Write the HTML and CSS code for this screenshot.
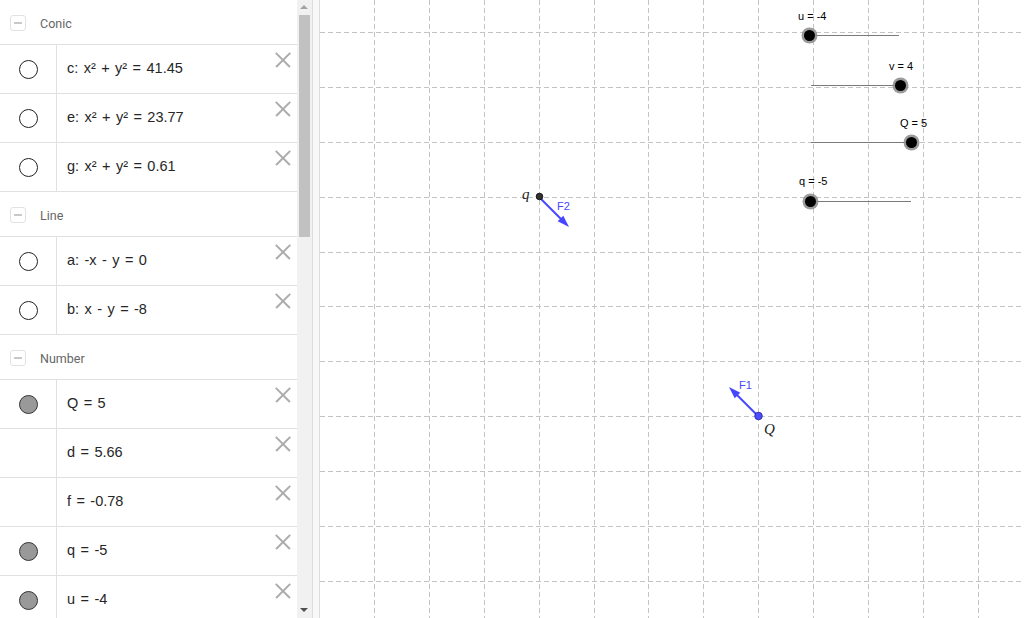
FILE: index.html
```html
<!DOCTYPE html>
<html>
<head>
<meta charset="utf-8">
<link rel="stylesheet" href="styles.css">
</head>
<body>
<div class="app">
  <div class="algebra">
    <div class="list">
      <div class="group-head"><span class="collapse"></span><span class="gname">Conic</span></div>
      <div class="row"><div class="marker"><span class="dot"></span></div><div class="expr">c: x² + y² = 41.45</div><span class="del"></span></div>
      <div class="row"><div class="marker"><span class="dot"></span></div><div class="expr">e: x² + y² = 23.77</div><span class="del"></span></div>
      <div class="row"><div class="marker"><span class="dot"></span></div><div class="expr">g: x² + y² = 0.61</div><span class="del"></span></div>
      <div class="group-head"><span class="collapse"></span><span class="gname">Line</span></div>
      <div class="row"><div class="marker"><span class="dot"></span></div><div class="expr">a: -x - y = 0</div><span class="del"></span></div>
      <div class="row"><div class="marker"><span class="dot"></span></div><div class="expr">b: x - y = -8</div><span class="del"></span></div>
      <div class="group-head"><span class="collapse"></span><span class="gname">Number</span></div>
      <div class="row"><div class="marker"><span class="dot filled"></span></div><div class="expr">Q = 5</div><span class="del"></span></div>
      <div class="row"><div class="marker"></div><div class="expr">d = 5.66</div><span class="del"></span></div>
      <div class="row"><div class="marker"></div><div class="expr">f = -0.78</div><span class="del"></span></div>
      <div class="row"><div class="marker"><span class="dot filled"></span></div><div class="expr">q = -5</div><span class="del"></span></div>
      <div class="row"><div class="marker"><span class="dot filled"></span></div><div class="expr">u = -4</div><span class="del"></span></div>
    </div>
    <div class="scrollbar">
      <div class="arrow up"></div>
      <div class="thumb"></div>
      <div class="track-fill"></div>
      <div class="arrow down"></div>
    </div>
  </div>
  <div class="splitter"></div>
  <div class="graphics">
    <svg class="canvas" width="704" height="618" viewBox="320 0 704 618">
      <g class="grid">
        <line x1="374.5" y1="0" x2="374.5" y2="618"/>
        <line x1="429.5" y1="0" x2="429.5" y2="618"/>
        <line x1="484.5" y1="0" x2="484.5" y2="618"/>
        <line x1="539.5" y1="0" x2="539.5" y2="618"/>
        <line x1="594.5" y1="0" x2="594.5" y2="618"/>
        <line x1="648.5" y1="0" x2="648.5" y2="618"/>
        <line x1="703.5" y1="0" x2="703.5" y2="618"/>
        <line x1="758.5" y1="0" x2="758.5" y2="618"/>
        <line x1="813.5" y1="0" x2="813.5" y2="618"/>
        <line x1="868.5" y1="0" x2="868.5" y2="618"/>
        <line x1="923.5" y1="0" x2="923.5" y2="618"/>
        <line x1="978.5" y1="0" x2="978.5" y2="618"/>
        <line x1="320" y1="32.5" x2="1024" y2="32.5"/>
        <line x1="320" y1="87.5" x2="1024" y2="87.5"/>
        <line x1="320" y1="142.5" x2="1024" y2="142.5"/>
        <line x1="320" y1="197.5" x2="1024" y2="197.5"/>
        <line x1="320" y1="252.5" x2="1024" y2="252.5"/>
        <line x1="320" y1="306.5" x2="1024" y2="306.5"/>
        <line x1="320" y1="361.5" x2="1024" y2="361.5"/>
        <line x1="320" y1="416.5" x2="1024" y2="416.5"/>
        <line x1="320" y1="471.5" x2="1024" y2="471.5"/>
        <line x1="320" y1="526.5" x2="1024" y2="526.5"/>
        <line x1="320" y1="581.5" x2="1024" y2="581.5"/>
      </g>
      <g class="sliders">
        <line x1="809" y1="35.5" x2="899" y2="35.5"/>
        <line x1="811" y1="85.5" x2="900" y2="85.5"/>
        <line x1="811" y1="142.5" x2="911" y2="142.5"/>
        <line x1="811" y1="201.5" x2="911" y2="201.5"/>
      </g>
      <g class="knobs">
        <circle class="halo" cx="809.5" cy="35.5" r="8"/><circle class="core" cx="809.5" cy="35.5" r="5.5"/>
        <circle class="halo" cx="900.5" cy="85.5" r="8"/><circle class="core" cx="900.5" cy="85.5" r="5.5"/>
        <circle class="halo" cx="911.5" cy="142.5" r="8"/><circle class="core" cx="911.5" cy="142.5" r="5.5"/>
        <circle class="halo" cx="810.5" cy="201.5" r="8"/><circle class="core" cx="810.5" cy="201.5" r="5.5"/>
      </g>
      <g class="slabels">
        <text x="798" y="20">u = -4</text>
        <text x="889" y="70">v = 4</text>
        <text x="900" y="127">Q = 5</text>
        <text x="799" y="185">q = -5</text>
      </g>
      <g class="vec">
        <line x1="539" y1="197" x2="561" y2="219"/>
        <polygon points="569,227 557.7,221.3 563.3,215.7"/>
        <line x1="758" y1="416" x2="737" y2="395"/>
        <polygon points="729,387 740.3,392.7 734.7,398.3"/>
      </g>
      <text class="vlabel" x="557" y="210">F2</text>
      <text class="vlabel" x="739" y="389">F1</text>
      <circle class="pt-black" cx="539.5" cy="196.5" r="3.3"/>
      <circle class="pt-blue" cx="758.5" cy="416" r="3.8"/>
      <text class="plabel" x="522" y="199">q</text>
      <text class="plabel" x="764" y="434">Q</text>
    </svg>
  </div>
</div>
</body>
</html>
```

FILE: styles.css
```css
html, body {
  margin: 0;
  padding: 0;
  background: #fff;
}
body {
  font-family: "Liberation Sans", Arial, sans-serif;
}
.app {
  display: flex;
  width: 1024px;
  height: 618px;
  overflow: hidden;
  background: #fff;
}
.algebra {
  display: flex;
  width: 312px;
  height: 618px;
  flex-shrink: 0;
}
.list {
  width: 297px;
  height: 618px;
  overflow: hidden;
  flex-shrink: 0;
  background: #fff;
}
.group-head {
  height: 44px;
  border-bottom: 1px solid #e0e0e0;
  display: flex;
  align-items: center;
  padding-left: 10px;
}
.collapse {
  width: 14px;
  height: 14px;
  border: 1px solid #e2e2e2;
  border-radius: 3px;
  position: relative;
  box-sizing: content-box;
  margin-top: 2px;
}
.collapse::after {
  content: "";
  position: absolute;
  left: 3px;
  top: 6px;
  width: 8px;
  height: 2px;
  background: #c8c8c8;
}
.gname {
  margin-left: 14px;
  font-family: Roboto, "Open Sans", sans-serif;
  font-size: 12.5px;
  color: #666;
  padding-top: 2px;
}
.row {
  height: 48px;
  border-bottom: 1px solid #e0e0e0;
  display: flex;
  align-items: center;
}
.marker {
  width: 56px;
  height: 48px;
  border-right: 1px solid #e0e0e0;
  display: flex;
  align-items: center;
  justify-content: center;
  flex-shrink: 0;
}
.dot {
  width: 17px;
  height: 17px;
  border: 1.3px solid #222;
  border-radius: 50%;
  background: #fff;
  margin-left: 1px;
}
.dot.filled {
  background: #999;
  border-color: #333;
}
.expr {
  padding-left: 10px;
  padding-bottom: 3px;
  font-size: 14.5px;
  color: #262626;
  flex: 1;
  white-space: pre;
  word-spacing: 1.4px;
}
.del {
  width: 16px;
  height: 16px;
  margin-right: 6px;
  align-self: flex-start;
  margin-top: 7px;
  position: relative;
}
.del::before, .del::after {
  content: "";
  position: absolute;
  left: -2px;
  top: 7px;
  width: 20px;
  height: 1.5px;
  background: #acacac;
  transform: rotate(45deg);
}
.del::after {
  transform: rotate(-45deg);
}
.scrollbar {
  width: 15px;
  height: 618px;
  background: #f1f1f1;
  display: flex;
  flex-direction: column;
  align-items: center;
  flex-shrink: 0;
}
.arrow {
  width: 15px;
  height: 15px;
  position: relative;
  flex-shrink: 0;
}
.arrow.up::after {
  content: "";
  position: absolute;
  left: 3px;
  top: 5px;
  border-left: 4px solid transparent;
  border-right: 4px solid transparent;
  border-bottom: 4px solid #a3a3a3;
}
.arrow.down::after {
  content: "";
  position: absolute;
  left: 3px;
  top: 5px;
  border-left: 4px solid transparent;
  border-right: 4px solid transparent;
  border-top: 4px solid #505050;
}
.thumb {
  width: 11px;
  height: 222px;
  background: #c1c1c1;
  flex-shrink: 0;
}
.track-fill {
  flex: 1;
}
.splitter {
  width: 6px;
  height: 618px;
  background: #f8f8f8;
  border-left: 1px solid #dcdcdc;
  border-right: 1px solid #dcdcdc;
  flex-shrink: 0;
}
.graphics {
  width: 704px;
  height: 618px;
  flex-shrink: 0;
}
.canvas {
  display: block;
}
.grid line {
  stroke: #c4c4c4;
  stroke-width: 1;
  stroke-dasharray: 5 3;
}
.sliders line {
  stroke: #7a7a7a;
  stroke-width: 1;
}
.halo {
  fill: #8a8a8a;
  fill-opacity: 0.85;
}
.core {
  fill: #000;
}
.slabels text {
  font-family: "Liberation Sans", Arial, sans-serif;
  font-size: 11px;
  fill: #000;
}
.vec line {
  stroke: #4646ff;
  stroke-width: 2;
}
.vec polygon {
  fill: #4646ff;
}
.vlabel {
  font-family: "Liberation Sans", Arial, sans-serif;
  font-size: 11px;
  fill: #4646ff;
}
.pt-black {
  fill: #333;
  stroke: #000;
  stroke-width: 0.8;
}
.pt-blue {
  fill: #4d4dff;
  stroke: #2020a0;
  stroke-width: 0.8;
}
.plabel {
  font-family: "Liberation Serif", "Times New Roman", serif;
  font-style: italic;
  font-size: 15px;
  fill: #222;
}
```
